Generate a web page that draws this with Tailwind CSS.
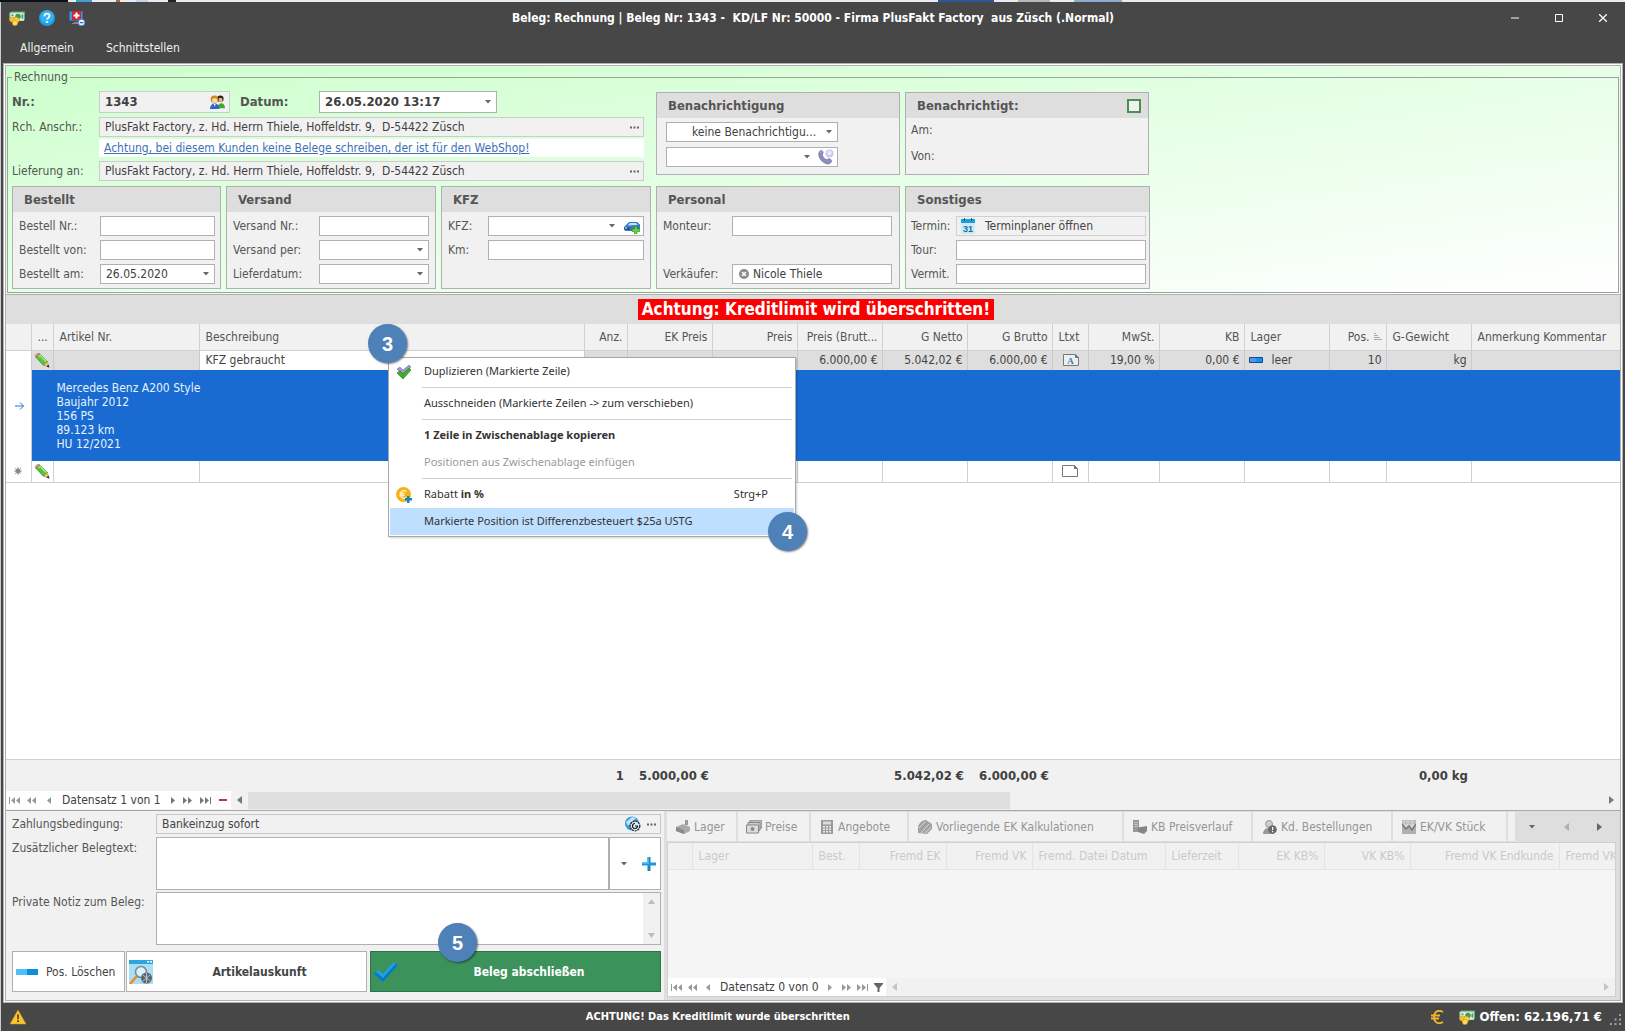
<!DOCTYPE html>
<html lang="de">
<head>
<meta charset="utf-8">
<title>Beleg: Rechnung</title>
<script src="https://cdn.jsdelivr.net/npm/@tailwindcss/browser@4"></script>
</head>
<body class="flex min-h-screen flex-col bg-[#c9cbce] font-['DejaVu_Sans_Condensed','DejaVu_Sans',sans-serif] text-xs text-[#555]">

<svg class="hidden" aria-hidden="true">
  <symbol id="caret" viewBox="0 0 6 4"><path d="M0 0h6L3 3.5z" fill="#666"/></symbol>
  <symbol id="dots" viewBox="0 0 9 3"><path d="M0 .5h2v2H0zM3.500 .5h2v2h-2zM7 .5h2v2H7z" fill="#666"/></symbol>
  <symbol id="first" viewBox="0 0 11 7"><path d="M0 0h1v7H0zM6 0v7L2 3.500zM11 0v7L7 3.500z" fill="currentColor"/></symbol>
  <symbol id="last" viewBox="0 0 11 7"><path d="M10 0h1v7h-1zM0 0v7l4-3.500zM5 0v7l4-3.500z" fill="currentColor"/></symbol>
  <symbol id="prev2" viewBox="0 0 9 7"><path d="M4 0v7L0 3.500zM9 0v7L5 3.500z" fill="currentColor"/></symbol>
  <symbol id="next2" viewBox="0 0 9 7"><path d="M0 0v7l4-3.500zM5 0v7l4-3.500z" fill="currentColor"/></symbol>
  <symbol id="prev" viewBox="0 0 4 7"><path d="M4 0v7L0 3.500z" fill="currentColor"/></symbol>
  <symbol id="next" viewBox="0 0 4 7"><path d="M0 0v7l4-3.500z" fill="currentColor"/></symbol>
  <symbol id="money" viewBox="0 0 16 16">
    <path d="M2 1.500h14V10H2z" fill="#5fae72"/><path d="M.5 2.500h14.500V11H.5z" fill="#b4dfba"/><path d="M2 3.500h11.500v6.500H2z" fill="#e8f6e8"/>
    <circle cx="9" cy="6.500" r="2.800" fill="#3f9a58"/><path d="M12.500 4.500H14v4h-1.500z" fill="#3f9a58"/><path d="M2.500 4.500h2v1.500h-2z" fill="#3f9a58"/>
    <circle cx="3.500" cy="9.500" r="2.800" fill="#f4c430" stroke="#c98f10" stroke-width=".5"/><circle cx="7.500" cy="10" r="2.800" fill="#f7cf45" stroke="#c98f10" stroke-width=".5"/><circle cx="6" cy="13" r="2.600" fill="#fbdc66" stroke="#c98f10" stroke-width=".5"/>
  </symbol>
  <symbol id="pencil" viewBox="0 0 16 16">
    <path d="M1 4.500 5 1l8 8-4 4z" fill="#55c83a" stroke="#2c7d1e" stroke-width=".8"/><path d="M3.500 4 5.500 2.500 12 9" fill="none" stroke="#a9f08c" stroke-width="1.400"/>
    <path d="M.8 4.500C-.5 2 2.500-.5 5 1z" fill="#eda098" stroke="#a33" stroke-width=".5"/><path d="m13 9 2 6-6-2z" fill="#e8c88a" stroke="#8a6a35" stroke-width=".5"/><path d="m14.200 12.500 1.300 3-3.300-1z" fill="#222"/>
  </symbol>
</svg>

<!-- slice of the window behind -->
<div class="flex h-0.5 shrink-0 items-stretch bg-[#e9ecef]">
  <div class="w-[68px] bg-[#0d0f18]"></div>
  <div class="ml-2 w-4 bg-[#3e9fdd]"></div>
  <div class="ml-6 w-1 bg-[#a86a3c]"></div>
  <div class="ml-4 w-3 bg-[#c5d5ea]"></div>
  <div class="ml-5 w-2 bg-[#222]"></div>
  <div class="ml-[762px] w-14 bg-[#2b579a]"></div>
  <div class="ml-6 w-8 bg-[#b5b8bb]"></div>
  <div class="ml-6 w-12 bg-[#8fa9cf]"></div>
</div>

<div class="ml-px flex flex-1 flex-col bg-[#474747]">
  <header class="text-white">
    <div class="flex h-[31px] items-center pr-2 pl-2">
      <div class="flex w-[120px] items-center gap-[14px]">
        <svg class="size-4" viewBox="0 0 16 16"><use href="#money"/></svg>
        <svg class="size-4" viewBox="0 0 16 16"><circle cx="8" cy="8" r="8" fill="#1e9fe6"/><circle cx="8" cy="7" r="6.500" fill="#35b2f2"/><path d="M5.500 6.200C5.500 2.800 10.500 3 10.500 6c0 1.800-2.400 1.900-2.400 3.600" fill="none" stroke="#fff" stroke-width="1.800"/><circle cx="8.100" cy="12" r="1.100" fill="#fff"/></svg>
        <svg class="size-4" viewBox="0 0 16 16"><path d="M0 1h14v10H0z" fill="#2f6fc0"/><path d="M1 2h12v8H1z" fill="#4b93e0"/><path d="M3 1h9v9H3z" fill="#d3232c"/><path d="M6.500 2.500h2v2h2v2h-2v2h-2v-2h-2v-2h2z" fill="#fff"/><path d="M5 12h5v1H5zM3 13h8v1H3z" fill="#888"/><circle cx="12.500" cy="12.500" r="3.300" fill="#e6f1fb" stroke="#3b7fc4" stroke-width=".8"/><path d="M10.800 12h3.500v1.200h-3.500z" fill="#2467ae"/></svg>
      </div>
      <h1 class="flex-1 text-center font-bold whitespace-pre">Beleg: Rechnung | Beleg Nr: 1343 -  KD/LF Nr: 50000 - Firma PlusFakt Factory  aus Züsch (.Normal)</h1>
      <div class="flex w-[120px] justify-end gap-8 pr-2">
        <button class="grid size-3 place-items-center" aria-label="Minimieren"><svg class="size-2" viewBox="0 0 8 8"><path d="M0 3.500h8v1H0z" fill="#fff"/></svg></button>
        <button class="grid size-3 place-items-center" aria-label="Maximieren"><svg class="size-2" viewBox="0 0 8 8"><path d="M.5.5h7v7h-7z" fill="none" stroke="#fff"/></svg></button>
        <button class="grid size-3 place-items-center" aria-label="Schließen"><svg class="size-2" viewBox="0 0 8 8"><path d="m0 0 8 8M8 0 0 8" stroke="#fff" stroke-width="1.300"/></svg></button>
      </div>
    </div>
    <nav class="flex h-[30px] items-center gap-8 pl-[19px]">
      <a href="#" class="text-[#f0f0f0]">Allgemein</a>
      <a href="#" class="text-[#f0f0f0]">Schnittstellen</a>
    </nav>
  </header>

  <div class="mr-0.5 ml-0.5 flex flex-1 flex-col border border-[#b0b0b0] bg-white p-px">
  <main class="flex flex-1 flex-col border border-[#b0b0b0] bg-[#f1f1f1]">

    <!-- document head -->
    <section class="bg-linear-to-br from-[#ccffcc] to-white px-px pt-[3px] pb-px">
      <fieldset class="border border-[#a0a0a0] px-1 pt-1.5 pb-[3px]">
        <legend class="px-0.5 leading-4">Rechnung</legend>
        <div class="grid grid-cols-[209px_210px_210px_244px_245px] gap-[5px]">
          <div class="col-span-3 flex flex-col gap-1 pr-[7px]">
            <div class="flex h-[22px] items-center">
              <label for="nr" class="w-[87px] text-[13px] font-bold">Nr.:</label>
              <div class="flex h-full w-[131px] items-center border border-[#c8cfc8] bg-[#f1f1f1] pr-1">
                <input id="nr" value="1343" readonly class="w-full min-w-0 flex-1 bg-transparent pl-[5px] text-[13px] font-bold text-[#404040]">
                <svg class="size-[15px]" viewBox="0 0 16 16"><circle cx="11" cy="4" r="3.500" fill="#2b2117"/><circle cx="11.200" cy="5.200" r="2.200" fill="#e9b97e"/><path d="M8 14c0-7 8-7 8 0z" fill="#3fa535"/><circle cx="4.700" cy="4.500" r="4" fill="#c98a1a"/><circle cx="5" cy="5.800" r="2.700" fill="#fad7a8"/><path d="M0 15c0-8 10-8 10 0z" fill="#2a68c2"/><path d="M4 9.500h2l-1 3z" fill="#fff"/></svg>
              </div>
              <label for="datum" class="w-[89px] pl-[10px] text-[13px] font-bold">Datum:</label>
              <div class="flex h-full w-[178px] items-center border border-[#b0b0b0] bg-white pr-[5px]">
                <input id="datum" value="26.05.2020 13:17" class="w-full min-w-0 flex-1 bg-transparent pl-[5px] text-[13px] font-bold text-[#404040]">
                <svg class="h-1 w-1.5"><use href="#caret"/></svg>
              </div>
            </div>
            <div class="flex h-5 items-center">
              <label for="anschr" class="w-[87px]">Rch. Anschr.:</label>
              <div class="flex h-full flex-1 items-center border border-[#c8cfc8] bg-[#f1f1f1] pr-1">
                <input id="anschr" readonly value="PlusFakt Factory, z. Hd. Herrn Thiele, Hoffeldstr. 9,  D-54422 Züsch" class="min-w-0 flex-1 bg-transparent pl-[5px] text-[#404040] whitespace-pre">
                <svg class="h-[3px] w-[9px]"><use href="#dots"/></svg>
              </div>
            </div>
            <div class="-mt-0.5 ml-[87px] flex h-[18px] items-center bg-white pl-[5px]">
              <a href="#" class="text-[#3f6fb5] underline">Achtung, bei diesem Kunden keine Belege schreiben, der ist für den WebShop!</a>
            </div>
            <div class="flex h-5 items-center">
              <label for="liefer" class="w-[87px]">Lieferung an:</label>
              <div class="flex h-full flex-1 items-center border border-[#c8cfc8] bg-[#f1f1f1] pr-1">
                <input id="liefer" readonly value="PlusFakt Factory, z. Hd. Herrn Thiele, Hoffeldstr. 9,  D-54422 Züsch" class="min-w-0 flex-1 bg-transparent pl-[5px] text-[#404040] whitespace-pre">
                <svg class="h-[3px] w-[9px]"><use href="#dots"/></svg>
              </div>
            </div>
          </div>

          <section class="mt-px mb-1.5 border border-[#b0b0b0] bg-[#f1f1f1]">
            <h2 class="h-[25px] bg-[#dedede] pl-[11px] text-[13px] leading-[25px] font-bold">Benachrichtigung</h2>
            <div class="flex flex-col gap-[5px] pt-1 pl-[9px]">
              <div class="flex h-5 w-[172px] items-center border border-[#b0b0b0] bg-white pr-[5px]">
                <select aria-label="Benachrichtigung" class="min-w-0 flex-1 appearance-none pl-[25px] text-[#404040]"><option>keine Benachrichtigu...</option></select>
                <svg class="h-1 w-1.5"><use href="#caret"/></svg>
              </div>
              <div class="flex h-5 w-[172px] items-center gap-2 border border-[#b0b0b0] bg-white pr-[3px]">
                <select aria-label="Kontakt" class="min-w-0 flex-1 appearance-none"><option></option></select>
                <svg class="h-1 w-1.5"><use href="#caret"/></svg>
                <svg class="size-4" viewBox="0 0 16 16"><circle cx="11.500" cy="4.500" r="4" fill="#c7c9f2"/><circle cx="11.500" cy="4" r="2.300" fill="#e8e8fc"/><path d="M1 3.500C2 1 4.500 1 5 3c.4 1.500-1 2-.5 3.500s2.500 4 4 4 2-1.500 3.500-.5c2 1 2 3 0 4.500C7 17-1 9 1 3.500z" fill="#8f8cbc" stroke="#625f94" stroke-width=".6"/><path d="M2.200 4c.5-1.200 1-1.500 1.800-1.200" fill="none" stroke="#d8d7f0" stroke-width=".8"/></svg>
              </div>
            </div>
          </section>
          <section class="mt-px mr-px mb-1.5 border border-[#b0b0b0] bg-[#f1f1f1]">
            <div class="flex h-[25px] items-center justify-between bg-[#dedede] pr-[7px] pl-[11px]">
              <h2 class="text-[13px] font-bold"><label for="ben">Benachrichtigt:</label></h2>
              <input id="ben" type="checkbox" class="size-[14px] appearance-none border-2 border-[#48914c] bg-[#f1f1f1]">
            </div>
            <p class="pt-1 pl-[5px] leading-4">Am:</p>
            <p class="pt-[10px] pl-[5px] leading-4">Von:</p>
          </section>

          <section class="h-[103px] border border-[#b0b0b0] bg-[#f1f1f1]">
            <h2 class="h-[25px] bg-[#dedede] pl-[11px] text-[13px] leading-[25px] font-bold">Bestellt</h2>
            <div class="grid grid-cols-[81px_1fr] auto-rows-[20px] items-center gap-y-1 pt-1 pr-[5px] pl-1.5">
              <label for="bnr">Bestell Nr.:</label><input id="bnr" class="h-5 w-full min-w-0 border border-[#b0b0b0] bg-white">
              <label for="bvon">Bestellt von:</label><input id="bvon" class="h-5 w-full min-w-0 border border-[#b0b0b0] bg-white">
              <label for="bam">Bestellt am:</label>
              <div class="flex h-5 items-center border border-[#b0b0b0] bg-white pr-[5px]"><input id="bam" value="26.05.2020" class="w-full min-w-0 flex-1 pl-[5px] text-[#404040]"><svg class="h-1 w-1.5"><use href="#caret"/></svg></div>
            </div>
          </section>
          <section class="border border-[#b0b0b0] bg-[#f1f1f1]">
            <h2 class="h-[25px] bg-[#dedede] pl-[11px] text-[13px] leading-[25px] font-bold">Versand</h2>
            <div class="grid grid-cols-[86px_1fr] auto-rows-[20px] items-center gap-y-1 pt-1 pr-1.5 pl-1.5">
              <label for="vnr">Versand Nr.:</label><input id="vnr" class="h-5 w-full min-w-0 border border-[#b0b0b0] bg-white">
              <label for="vper">Versand per:</label>
              <div class="flex h-5 items-center border border-[#b0b0b0] bg-white pr-[5px]"><select id="vper" class="min-w-0 flex-1 appearance-none"><option></option></select><svg class="h-1 w-1.5"><use href="#caret"/></svg></div>
              <label for="vdat">Lieferdatum:</label>
              <div class="flex h-5 items-center border border-[#b0b0b0] bg-white pr-[5px]"><select id="vdat" class="min-w-0 flex-1 appearance-none"><option></option></select><svg class="h-1 w-1.5"><use href="#caret"/></svg></div>
            </div>
          </section>
          <section class="border border-[#b0b0b0] bg-[#f1f1f1]">
            <h2 class="h-[25px] bg-[#dedede] pl-[11px] text-[13px] leading-[25px] font-bold">KFZ</h2>
            <div class="grid grid-cols-[40px_1fr] auto-rows-[20px] items-center gap-y-1 pt-1 pr-1.5 pl-1.5">
              <label for="kfz">KFZ:</label>
              <div class="flex h-5 items-center gap-[9px] border border-[#b0b0b0] bg-white pr-[3px]"><select id="kfz" class="min-w-0 flex-1 appearance-none"><option></option></select><svg class="h-1 w-1.5"><use href="#caret"/></svg>
                <svg class="size-4" viewBox="0 0 16 16"><path d="M0 9 5 4h8l3 2.500V12l-2 1H2l-2-1z" fill="#3a78c4"/><path d="m3.500 7.500 2.500-2.500h6l2 2z" fill="#bfe0fa"/><path d="M0 9.500h6V12H1z" fill="#244f94"/><path d="M1 9.500h2v1H1z" fill="#fff"/><path d="M10.500 8.500h2.500V11h3v2.500h-3V16h-2.500v-2.500H8V11h2.500z" fill="#5fd83c" stroke="#2b8d14" stroke-width=".6"/></svg></div>
              <label for="km">Km:</label><input id="km" class="h-5 w-full min-w-0 border border-[#b0b0b0] bg-white">
            </div>
          </section>
          <section class="border border-[#b0b0b0] bg-[#f1f1f1]">
            <h2 class="h-[25px] bg-[#dedede] pl-[11px] text-[13px] leading-[25px] font-bold">Personal</h2>
            <div class="grid grid-cols-[69px_1fr] grid-rows-[20px_20px_20px] items-center gap-y-1 pt-1 pr-[7px] pl-1.5">
              <label for="mon">Monteur:</label><input id="mon" class="h-5 w-full min-w-0 border border-[#b0b0b0] bg-white">
              <label for="verk" class="row-start-3">Verkäufer:</label>
              <div class="row-start-3 flex h-5 items-center gap-1 border border-[#b0b0b0] bg-white pl-1.5">
                <svg class="size-[10px]" viewBox="0 0 10 10"><circle cx="5" cy="5" r="5" fill="#8a8a8a"/><path d="m3 3 4 4M7 3 3 7" stroke="#fff" stroke-width="1.600"/></svg>
                <input id="verk" value="Nicole Thiele" class="w-full min-w-0 flex-1 text-[#404040]">
              </div>
            </div>
          </section>
          <section class="border border-[#b0b0b0] bg-[#f1f1f1]">
            <h2 class="h-[25px] bg-[#dedede] pl-[11px] text-[13px] leading-[25px] font-bold">Sonstiges</h2>
            <div class="grid grid-cols-[45px_1fr] auto-rows-[20px] items-center gap-y-1 pt-1 pr-[3px] pl-[5px]">
              <span>Termin:</span>
              <button class="flex h-5 items-center gap-[10px] border border-[#d0d0d0] pl-1 text-[#444]">
                <svg class="h-4 w-[14px]" viewBox="0 0 14 16"><path d="M0 1h14v15H0z" fill="#cfe9f5"/><path d="M0 1h14v4H0z" fill="#1ba0dc"/><path d="M3 0h1v3H3zM10 0h1v3h-1z" fill="#0b5f8a"/><text x="7" y="14" text-anchor="middle" font-size="9" font-weight="bold" fill="#12719f" font-family="Liberation Sans">31</text></svg>
                Terminplaner öffnen</button>
              <label for="tour">Tour:</label><input id="tour" class="h-5 w-full min-w-0 border border-[#b0b0b0] bg-white">
              <label for="verm">Vermit.</label><input id="verm" class="h-5 w-full min-w-0 border border-[#b0b0b0] bg-white">
            </div>
          </section>
        </div>
      </fieldset>
    </section>

    <!-- positions -->
    <section class="relative flex flex-1 flex-col border-t border-[#b0b0b0] bg-white">
      <div class="flex h-[29px] items-center justify-center bg-[#dedede] pl-1.5">
        <strong class="bg-[#fb0000] px-1 text-[17px] leading-[21px] text-white">Achtung: Kreditlimit wird überschritten!</strong>
      </div>
      <table class="w-full table-fixed border-collapse">
        <colgroup><col class="w-[25px]"><col class="w-[22px]"><col class="w-[146px]"><col class="w-[385px]"><col class="w-[43px]"><col class="w-[85px]"><col class="w-[85px]"><col class="w-[85px]"><col class="w-[85px]"><col class="w-[85px]"><col class="w-[36px]"><col class="w-[71px]"><col class="w-[85px]"><col class="w-[85px]"><col class="w-[57px]"><col class="w-[85px]"><col></colgroup>
        <thead>
          <tr class="h-[26px] border-b border-[#d0d0d0] bg-[#f1f1f1] text-left whitespace-nowrap [&>th]:border-r [&>th]:border-[#d0d0d0] [&>th]:pr-1 [&>th]:pl-1.5 [&>th]:font-normal [&>th:last-child]:border-r-0">
            <th></th><th>...</th><th>Artikel Nr.</th><th>Beschreibung</th><th class="text-right">Anz.</th><th class="text-right">EK Preis</th><th class="text-right">Preis</th><th class="text-right">Preis (Brutt...</th><th class="text-right">G Netto</th><th class="text-right">G Brutto</th><th>Ltxt</th><th class="text-right">MwSt.</th><th class="text-right">KB</th><th>Lager</th>
            <th><span class="flex items-center justify-end gap-1">Pos.<svg class="size-2" viewBox="0 0 8 8"><path d="M0 0h2v1H0zM0 2h4v1H0zM0 4h6v1H0zM0 6h8v1H0z" fill="#aaa"/></svg></span></th>
            <th>G-Gewicht</th><th>Anmerkung Kommentar</th>
          </tr>
        </thead>
        <tbody>
          <tr class="h-5 bg-[#dedede] text-right leading-4 whitespace-nowrap text-[#444] [&>td]:border-r [&>td]:border-[#cacaca] [&>td]:pr-1 [&>td]:pl-1.5 [&>td:last-child]:border-r-0">
            <td rowspan="2" class="bg-white"><svg class="mx-auto h-2 w-[9px]" viewBox="0 0 9 8"><path d="M0 4h8.500M5 .5 8.500 4 5 7.500" fill="none" stroke="#2a72cf"/></svg></td>
            <td class="px-[3px]!"><svg class="size-[15px]"><use href="#pencil"/></svg></td><td></td><td class="bg-white text-left">KFZ gebraucht</td><td></td><td></td><td></td><td>6.000,00 €</td><td>5.042,02 €</td><td>6.000,00 €</td>
            <td><svg class="mx-auto h-3 w-4" viewBox="0 0 16 12"><path d="M.5.5h12l3 3v8H.5z" fill="#eee" stroke="#777"/><path d="M12 0v4h4z" fill="#777"/><text x="7.500" y="9.500" text-anchor="middle" font-size="9" font-weight="bold" fill="#3c76c0" font-family="Liberation Serif">A</text></svg></td>
            <td>19,00 %</td><td>0,00 €</td>
            <td><span class="flex items-center gap-[9px]"><svg class="-ml-0.5 h-1.5 w-[14px]" viewBox="0 0 14 6"><path d="M.5.5h13v5H.5z" fill="#1592f0" stroke="#0c4a9c"/><path d="M1 1h6v4H1z" fill="#5c96d6"/></svg>leer</span></td>
            <td>10</td><td>kg</td><td></td>
          </tr>
          <tr class="h-[91px] bg-[#196bd1]"><td colspan="16" class="py-0 pl-[25px] align-middle leading-[14px] text-[#e6f2ff]">Mercedes Benz A200 Style<br>Baujahr 2012<br>156 PS<br>89.123 km<br>HU 12/2021</td></tr>
          <tr class="h-[21px] border-b border-[#d0d0d0] [&>td]:border-r [&>td]:border-[#d0d0d0] [&>td:last-child]:border-r-0">
            <td class="border-b-white!"><svg class="mx-auto size-2" viewBox="0 0 8 8"><circle cx="4" cy="4" r="2.500" fill="#888"/><path d="M4 0v8M0 4h8M1 1l6 6M7 1 1 7" stroke="#888" stroke-width=".8"/></svg></td>
            <td class="px-[3px]"><svg class="size-[15px]"><use href="#pencil"/></svg></td><td></td><td></td><td></td><td></td><td></td><td></td><td></td><td></td>
            <td><svg class="mx-auto h-3 w-4" viewBox="0 0 16 12"><path d="M.5.5h12l3 3v8H.5z" fill="#fff" stroke="#777"/><path d="M12 0v4h4z" fill="#777"/></svg></td>
            <td></td><td></td><td></td><td></td><td></td><td></td>
          </tr>
        </tbody>
      </table>
      <div class="flex-1"></div>
      <div class="grid h-8 grid-cols-[618px_85px_255px_85px_419px_1fr] items-center border-t border-[#d0d0d0] bg-[#f1f1f1] text-right text-[13px] font-bold whitespace-nowrap text-[#404040]">
        <span>1</span><span>5.000,00 €</span><span>5.042,02 €</span><span>6.000,00 €</span><span>0,00 kg</span>
      </div>
      <div class="flex h-[19px] items-center bg-[#f1f1f1] pb-px">
        <div class="flex h-[18px] items-center bg-white text-[#999] [&>button]:grid [&>button]:w-[17px] [&>button]:place-items-center">
          <button aria-label="Erster"><svg class="h-[7px] w-[11px]"><use href="#first"/></svg></button>
          <button aria-label="Seite zurück"><svg class="h-[7px] w-[9px]"><use href="#prev2"/></svg></button>
          <button aria-label="Zurück"><svg class="h-[7px] w-1"><use href="#prev"/></svg></button>
          <span class="w-[110px] pl-[5px] whitespace-nowrap text-[#404040]">Datensatz 1 von 1</span>
          <span class="flex w-16 items-center justify-between pr-1 pl-1 text-[#777]">
            <button aria-label="Weiter"><svg class="h-[7px] w-1"><use href="#next"/></svg></button>
            <button aria-label="Seite weiter"><svg class="h-[7px] w-[9px]"><use href="#next2"/></svg></button>
            <button aria-label="Letzter"><svg class="h-[7px] w-[11px]"><use href="#last"/></svg></button>
            <button aria-label="Löschen"><svg class="h-0.5 w-2" viewBox="0 0 8 2"><path d="M0 0h8v2H0z" fill="#c0393f"/></svg></button>
          </span>
        </div>
        <div class="flex flex-1 items-center pr-1.5 pl-1.5 text-[#777]">
          <svg class="mr-1.5 h-2 w-[5px]" viewBox="0 0 5 8"><path d="M5 0v8L0 4z" fill="currentColor"/></svg>
          <div class="flex h-[17px] flex-1"><div class="w-[56%] bg-[#dedede]"></div></div>
          <svg class="h-2 w-[5px]" viewBox="0 0 5 8"><path d="M0 0v8l5-4z" fill="currentColor"/></svg>
        </div>
      </div>

      <!-- context menu -->
      <div role="menu" class="absolute top-[62px] left-[382px] flex w-[408px] flex-col border border-[#a8a8a8] bg-white p-px pt-0 font-['Noto_Sans',sans-serif] text-[11px] text-[#333] shadow-[1px_1px_2px_rgba(0,0,0,0.2)] [&>button]:flex [&>button]:h-[27px] [&>button]:items-center [&>hr]:my-0.5 [&>hr]:mr-0.5 [&>hr]:ml-8 [&>hr]:border-[#d0d0d0]">
        <button role="menuitem"><span class="w-[34px] pl-1.5"><svg class="size-4" viewBox="0 0 16 16"><path d="m1 5 3-2 3 3 6-5 2 2-8 8z" fill="#9a98c4" stroke="#6d6b98" stroke-width=".5"/><path d="m1 9 3-2 3 3 6-6 2 2-8 9z" fill="#3fae2a" stroke="#20781a" stroke-width=".6"/></svg></span>Duplizieren (Markierte Zeile)</button>
        <hr>
        <button role="menuitem" class="pl-[34px]">Ausschneiden (Markierte Zeilen -&gt; zum verschieben)</button>
        <hr>
        <button role="menuitem" class="pl-[34px] font-bold">1 Zeile in Zwischenablage kopieren</button>
        <button role="menuitem" class="pl-[34px] text-[#9a9a9a]">Positionen aus Zwischenablage einfügen</button>
        <hr>
        <button role="menuitem"><span class="w-[34px] pl-1.5"><svg class="size-4" viewBox="0 0 16 16"><circle cx="7.500" cy="7.500" r="7.500" fill="#f5b21b"/><path d="M10.500 4.500C7.500 2.500 4.500 4.500 4.500 7.500s3 5 6 3M3.500 6.500h5M3.500 8.500h5" fill="none" stroke="#fff3c4" stroke-width="1.400"/><path d="M11 9h2.500v2H16v2.500h-2.500V16H11v-2.500H9V11h2z" fill="#1583b8"/></svg></span><span class="flex-1 text-left">Rabatt <b>in %</b></span><span class="pr-[26px]">Strg+P</span></button>
        <button role="menuitem" class="bg-[#bfdfff] pl-[34px]">Markierte Position ist Differenzbesteuert $25a USTG</button>
      </div>
      <div class="absolute top-[29px] left-[362px] grid size-[39px] place-items-center rounded-full bg-[#4f81b9] font-['Liberation_Sans',sans-serif] text-xl font-bold text-white shadow-[1px_1px_2px_rgba(0,0,0,0.5)]">3</div>
      <div class="absolute top-[217px] left-[762px] grid size-[39px] place-items-center rounded-full bg-[#4f81b9] font-['Liberation_Sans',sans-serif] text-xl font-bold text-white shadow-[1px_1px_2px_rgba(0,0,0,0.5)]">4</div>
    </section>

    <!-- lower part -->
    <section class="flex h-[190px] shrink-0 border-t border-[#a8a8a8]">
      <div class="relative w-[658px] shrink-0 pt-[3px] pr-[3px] pl-1.5">
        <div class="grid grid-cols-[144px_1fr] gap-y-[3px]">
          <label for="zahl" class="leading-5">Zahlungsbedingung:</label>
          <div class="mb-px flex h-5 items-center gap-1.5 border border-[#c8c8c8] pr-1">
            <input id="zahl" readonly value="Bankeinzug sofort" class="min-w-0 flex-1 pl-[5px] text-[#444]">
            <svg class="size-4" viewBox="0 0 16 16"><circle cx="7" cy="7.500" r="7" fill="#3a9ad6"/><path d="m1 6 6-5 4 1-8 8z" fill="#bfe3f7"/><circle cx="10" cy="10" r="4.800" fill="#dff0fa" stroke="#223" stroke-width="1.300" stroke-dasharray="2 .8"/><path d="M10 7.500a2.500 2.500 0 1 0 2.500 2.500M10 10h3" fill="none" stroke="#111" stroke-width="1.100"/></svg>
            <svg class="h-[3px] w-[9px]"><use href="#dots"/></svg>
          </div>
          <label for="zus" class="pt-0.5 leading-4">Zusätzlicher Belegtext:</label>
          <div class="mb-px -mt-px flex h-[53px] border border-[#b0b0b0] bg-white">
            <textarea id="zus" class="flex-1 resize-none"></textarea>
            <div class="flex w-[52px] items-center justify-between border-l-2 border-[#b0b0b0] pr-1 pl-[11px]">
              <svg class="h-1 w-1.5"><use href="#caret"/></svg>
              <button aria-label="Hinzufügen"><svg class="size-[14px]" viewBox="0 0 14 14"><path d="M5.500 0h3v14h-3z" fill="#1787c4"/><path d="M0 5.500h14v3H0z" fill="#1a9ad8"/><path d="M0 5.500h7v1.500H0zM5.500 0H7v7H5.500z" fill="#3db9ee"/></svg></button>
            </div>
          </div>
          <label for="priv" class="leading-4">Private Notiz zum Beleg:</label>
          <div class="-mt-0.5 flex h-[53px] border border-[#b0b0b0] bg-white">
            <textarea id="priv" class="flex-1 resize-none"></textarea>
            <div class="flex w-[17px] flex-col items-center justify-between bg-[#f1f1f1] py-1.5">
              <svg class="h-[5px] w-[7px]" viewBox="0 0 7 5"><path d="M0 5 3.500 0 7 5z" fill="#bdbdbd"/></svg>
              <svg class="h-[5px] w-[7px]" viewBox="0 0 7 5"><path d="m0 0 3.500 5L7 0z" fill="#bdbdbd"/></svg>
            </div>
          </div>
        </div>
        <div class="mt-1.5 flex h-[41px] text-[#444]">
          <button class="mr-px flex w-[113px] items-center gap-2 border border-[#b0b0b0] bg-white pl-[3px] whitespace-nowrap">
            <svg class="h-1.5 w-[22px] shrink-0" viewBox="0 0 22 6"><path d="M0 0h22v6H0z" fill="#0d8edb"/><path d="M0 0h11v6H0z" fill="#4cc0f5"/></svg>Pos. Löschen</button>
          <button class="mr-[3px] flex w-[241px] items-center border border-[#b0b0b0] bg-white pl-0.5 font-bold">
            <svg class="size-6" viewBox="0 0 24 24"><path d="M0 0h24v24H0z" fill="#a9dff5"/><path d="M0 0h24v4H0z" fill="#2ea4de"/><path d="M18 1h2v1.500h-2zM21 1h2v1.500h-2z" fill="#fff"/><path d="m1 24 7-8" stroke="#f08a24" stroke-width="2.500"/><circle cx="12" cy="12" r="5.500" fill="#d8f1fb" stroke="#7d8a93" stroke-width="1.600"/><circle cx="17.500" cy="18" r="5.500" fill="#5a6672"/><path d="M14 15l7 6M21 15l-7 6M17.500 13v10" stroke="#c3ccd3" stroke-width=".9"/></svg>
            <span class="flex-1">Artikelauskunft</span></button>
          <button class="flex flex-1 items-center border border-[#2f7148] bg-[#3c925b] pl-[3px] font-bold text-white">
            <svg class="h-5 w-6" viewBox="0 0 24 20"><path d="m0 12 4-4 5 4L20 0l4 3L9 20z" fill="#1aa3ea"/><path d="M9 20 24 3l-2-1.500L9 16l-7-6-2 2z" fill="#0878bd"/></svg>
            <span class="flex-1">Beleg abschließen</span></button>
        </div>
        <div class="absolute top-[112px] left-[432px] grid size-[39px] place-items-center rounded-full bg-[#4f81b9] font-['Liberation_Sans',sans-serif] text-xl font-bold text-white shadow-[1px_1px_2px_rgba(0,0,0,0.5)]">5</div>
      </div>

      <div class="flex min-w-0 flex-1 flex-col bg-[#dedede] pr-1 pb-[3px] pl-[3px] text-[#959595]">
        <div class="flex h-[31px] items-stretch gap-0.5 pt-px pb-px whitespace-nowrap [&>button]:flex [&>button]:items-center [&>button]:bg-[#f1f1f1]">
          <button class="w-[69px] gap-1 pl-[9px]"><svg class="size-[14px]" viewBox="0 0 14 14"><path d="m0 7 7-3 7 3v4l-6 3-8-3z" fill="#aaa"/><path d="m0 7 8 3v4l-8-3z" fill="#8a8a8a"/><path d="M9 0h3v5H9z" fill="#999"/></svg>Lager</button>
          <button class="w-[71px] gap-[3px] pl-2"><svg class="h-[14px] w-4" viewBox="0 0 16 14"><path d="M4 0h12v8H4z" fill="#bbb" stroke="#888"/><path d="M2 2.500h12v8H2z" fill="#ccc" stroke="#888"/><path d="M.5 5h12v8H.5z" fill="#ddd" stroke="#888"/><circle cx="6.500" cy="9" r="2" fill="#888"/></svg>Preise</button>
          <button class="w-[96px] gap-[5px] pl-[10px]"><svg class="h-[14px] w-3" viewBox="0 0 12 14"><path d="M0 0h12v14H0z" fill="#999"/><path d="M2 1.500h8v3H2z" fill="#ddd"/><path d="M2 6h2v1.500H2zM5 6h2v1.500H5zM8 6h2v1.500H8zM2 8.500h2V10H2zM5 8.500h2V10H5zM8 8.500h2V10H8zM2 11h2v1.500H2zM5 11h2v1.500H5zM8 11h2v1.500H8z" fill="#eee"/></svg>Angebote</button>
          <button class="w-[213px] gap-1 pl-[9px]"><svg class="size-[14px]" viewBox="0 0 14 14"><path d="M0 13V7c1-4 4-7 8-7l6 4v5l-5 5z" fill="#a2a2a2"/><path d="m3 13 8-9M7 13l6-6M1 8l6-6" stroke="#d8d8d8"/></svg>Vorliegende EK Kalkulationen</button>
          <button class="w-[127px] gap-1 pl-[9px]"><svg class="size-[14px]" viewBox="0 0 14 14"><path d="M0 0h6v12H0z" fill="#999"/><path d="M1.500 2h3v1h-3zM1.500 4h3v1h-3zM1.500 6h3v1h-3z" fill="#ccc"/><path d="M5 7.500 14 6v5l-3 3-6-2z" fill="#858585"/></svg>KB Preisverlauf</button>
          <button class="w-[138px] gap-1 pl-[10px]"><svg class="size-[14px]" viewBox="0 0 14 14"><circle cx="6" cy="4" r="3.500" fill="#ccc" stroke="#999"/><path d="M0 14c0-8 11-8 11 0z" fill="#999"/><circle cx="9.500" cy="9.500" r="4.300" fill="#6a6a6a"/><path d="M9 7h1.200v3H9zM9 11h1.200v1.200H9z" fill="#fff"/></svg>Kd. Bestellungen</button>
          <button class="w-[113px] gap-1 pl-[9px]"><svg class="size-[14px]" viewBox="0 0 14 14"><path d="M0 0h14v14H0z" fill="#b0b0b0"/><path d="M.5.5h13v5L10 9 7 6 4 9 .5 4z" fill="#d6d6d6"/><path d="M4 0v5M8 0v5M12 0v4M0 3h14" stroke="#aaa" stroke-width=".6"/><path d="m0 4 4 5 3-3 3 4 4-6" fill="none" stroke="#777" stroke-width="1.500"/></svg>EK/VK Stück</button>
          <div class="w-[7px] bg-[#f1f1f1]"></div>
          <div class="flex flex-1 items-center justify-between pr-[14px] pl-3">
            <svg class="h-1 w-1.5"><use href="#caret"/></svg>
            <svg class="h-2 w-[5px] text-[#b0b0b0]" viewBox="0 0 5 8"><path d="M5 0v8L0 4z" fill="currentColor"/></svg>
            <svg class="h-2 w-[5px] text-[#666]" viewBox="0 0 5 8"><path d="M0 0v8l5-4z" fill="currentColor"/></svg>
          </div>
        </div>
        <div class="flex flex-1 flex-col overflow-hidden border border-[#d0d0d0] bg-[#f5f5f5]">
          <table class="w-full table-fixed border-collapse">
            <colgroup><col class="w-[24px]"><col class="w-[120px]"><col class="w-[47px]"><col class="w-[87px]"><col class="w-[86px]"><col class="w-[133px]"><col class="w-[73px]"><col class="w-[86px]"><col class="w-[86px]"><col class="w-[149px]"><col></colgroup>
            <thead><tr class="h-[26px] border-b border-[#e4e4e4] bg-[#f1f1f1] text-left whitespace-nowrap text-[#cacaca] [&>th]:overflow-hidden [&>th]:border-r [&>th]:border-[#e4e4e4] [&>th]:pr-[5px] [&>th]:pl-1.5 [&>th]:font-normal">
              <th></th><th>Lager</th><th>Best.</th><th class="text-right">Fremd EK</th><th class="text-right">Fremd VK</th><th>Fremd. Datei Datum</th><th>Lieferzeit</th><th class="text-right">EK KB%</th><th class="text-right">VK KB%</th><th class="text-right">Fremd VK Endkunde</th><th class="border-r-0! pr-0!">Fremd VK</th>
            </tr></thead>
          </table>
          <div class="flex-1"></div>
          <div class="flex h-[18px] items-center bg-[#f1f1f1] text-[#999]">
            <div class="flex h-full items-center bg-white [&>button]:grid [&>button]:w-4 [&>button]:place-items-center">
              <button aria-label="Erster"><svg class="h-[7px] w-[11px]"><use href="#first"/></svg></button>
              <button aria-label="Seite zurück"><svg class="h-[7px] w-[9px]"><use href="#prev2"/></svg></button>
              <button aria-label="Zurück"><svg class="h-[7px] w-1"><use href="#prev"/></svg></button>
              <span class="w-[106px] pl-1 whitespace-nowrap text-[#404040]">Datensatz 0 von 0</span>
              <button aria-label="Weiter"><svg class="h-[7px] w-1"><use href="#next"/></svg></button>
              <button aria-label="Seite weiter"><svg class="h-[7px] w-[9px]"><use href="#next2"/></svg></button>
              <button aria-label="Letzter"><svg class="h-[7px] w-[11px]"><use href="#last"/></svg></button>
              <button aria-label="Filter"><svg class="size-[9px]" viewBox="0 0 9 9"><path d="M0 0h9v1L5.500 5v4h-2V5L0 1z" fill="#666"/></svg></button>
            </div>
            <div class="flex flex-1 justify-between px-1.5 text-[#c4c4c4]">
              <svg class="h-2 w-[5px]" viewBox="0 0 5 8"><path d="M5 0v8L0 4z" fill="currentColor"/></svg>
              <svg class="h-2 w-[5px]" viewBox="0 0 5 8"><path d="M0 0v8l5-4z" fill="currentColor"/></svg>
            </div>
          </div>
        </div>
      </div>
    </section>
  </main>
  </div>

  <footer class="flex h-7 items-center pr-1 pl-[9px] font-bold text-white">
    <svg class="size-4" viewBox="0 0 16 16"><path d="M8 1 16 15H0z" fill="#f7c531" stroke="#d99a10" stroke-width=".5"/><path d="M7.200 5.500h1.700l-.3 5h-1.100zM7.200 11.500h1.700V13H7.200z" fill="#3a2c00"/></svg>
    <p class="flex-1 pr-5 text-center text-[11px]">ACHTUNG! Das Kreditlimit wurde überschritten</p>
    <svg class="mr-[15px] size-[14px]" viewBox="0 0 14 14"><path d="M13 2C8-1 4 2 4 7s4 8 9 5M1 5.500h9M1 8.500h8" fill="none" stroke="#eeb52a" stroke-width="1.800"/></svg>
    <svg class="mr-[5px] size-4"><use href="#money"/></svg>
    <span class="text-[13px]">Offen: 62.196,71 €</span>
    <svg class="mt-1 ml-2 size-[11px]" viewBox="0 0 11 11"><path d="M9 0h2v2H9zM4.500 4.500h2v2h-2zM9 4.500h2v2H9zM0 9h2v2H0zM4.500 9h2v2h-2zM9 9h2v2H9z" fill="#a0a0a0"/></svg>
  </footer>
</div>
</body>
</html>
